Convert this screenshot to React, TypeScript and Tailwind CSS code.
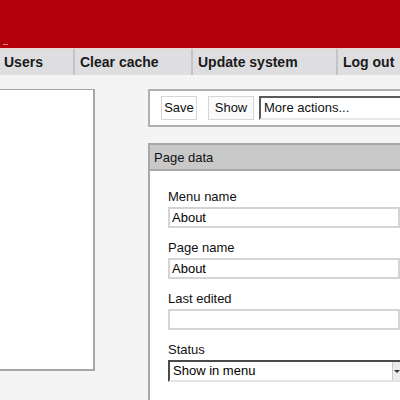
import React from "react";

const font = { fontFamily: '"Liberation Sans", Arial, sans-serif' };

function Field({ label, value }: { label: string; value: string }) {
  return (
    <div className="flex flex-col">
      <div className="text-[13px] leading-[16px] text-[#111]">{label}</div>
      <div className="mt-[2px] h-[21px] border-2 border-[#d4d4d4] bg-white pl-[2px] text-[13px] leading-[17px] text-black">
        {value}
      </div>
    </div>
  );
}

export default function App() {
  return (
    <div className="w-[400px] h-[400px] overflow-hidden bg-[#f4f4f4]" style={font}>
      {/* red header */}
      <div className="relative h-[48px] bg-[#b3000b]">
        <span className="absolute left-[3px] top-[44px] h-[1px] w-[5px] bg-[#d88a8a]" />
      </div>
      <div className="h-[1px] bg-[#f0d0d0]" />
      {/* nav */}
      <div className="flex h-[26px] bg-[#dedee0] text-[14px] font-bold text-[#1a1a1a] leading-[27px]">
        <div className="w-[75px] shrink-0 border-r-2 border-[#c4c4c6] pl-[4px]">Users</div>
        <div className="w-[118px] shrink-0 border-r-2 border-[#c4c4c6] pl-[5px]">Clear cache</div>
        <div className="w-[145px] shrink-0 border-r-2 border-[#c4c4c6] pl-[5px]">Update system</div>
        <div className="shrink-0 pl-[5px] whitespace-nowrap">Log out</div>
      </div>
      {/* body */}
      <div className="flex pt-[14px]">
        <div className="ml-[-2px] h-[282px] w-[97px] shrink-0 border-t border-r-2 border-b-2 border-[#a6a6a6] bg-white" />
        <div className="ml-[53px] flex flex-1 flex-col">
          <div className="flex h-[38px] items-center gap-[11px] border-2 border-r-0 border-[#b0b0b0] bg-white pl-[11px]">
            <div className="flex h-[24px] w-[36px] items-center justify-center border border-[#d6d6d6] bg-white text-[13px] text-[#111]">Save</div>
            <div className="flex h-[24px] w-[46px] items-center justify-center border border-[#d6d6d6] bg-[#fafafa] text-[13px] text-[#111]">Show</div>
            <div className="ml-[-6px] flex h-[24px] flex-1 items-center border-2 border-t-[#5a5a5a] border-l-[#5a5a5a] border-r-0 border-b-[#e8e8e8] bg-white pl-[3px] text-[13px] text-[#111] whitespace-nowrap">
              More actions...
            </div>
          </div>
          <div className="mt-[16px] flex flex-col border-l-2 border-t-2 border-[#a8a8a8] bg-white">
            <div className="h-[26px] border-b-2 border-[#a8a8a8] bg-[#c9c9c9] pl-[4px] text-[13px] leading-[25px] text-[#111]">
              Page data
            </div>
            <div className="flex flex-col gap-[12px] pl-[18px] pt-[18px] pb-[20px]">
              <Field label="Menu name" value="About" />
              <Field label="Page name" value="About" />
              <Field label="Last edited" value="" />
              <div className="flex flex-col">
                <div className="text-[13px] leading-[16px] text-[#111]">Status</div>
                <div className="relative mt-[2px] flex h-[22px] items-center border-2 border-t-[#4a4a4a] border-l-[#4a4a4a] border-r-0 border-b-[#e4e4e4] bg-white pl-[3px] text-[13px] text-black">
                  Show in menu
                  <div className="absolute right-0 top-0 flex h-[18px] w-[8px] items-center justify-center border-l border-[#c8c8c8] bg-[#ececec]">
                    <span className="block h-0 w-0 border-x-[3px] border-t-[3px] border-x-transparent border-t-[#333]" />
                  </div>
                </div>
              </div>
            </div>
          </div>
        </div>
      </div>
    </div>
  );
}
